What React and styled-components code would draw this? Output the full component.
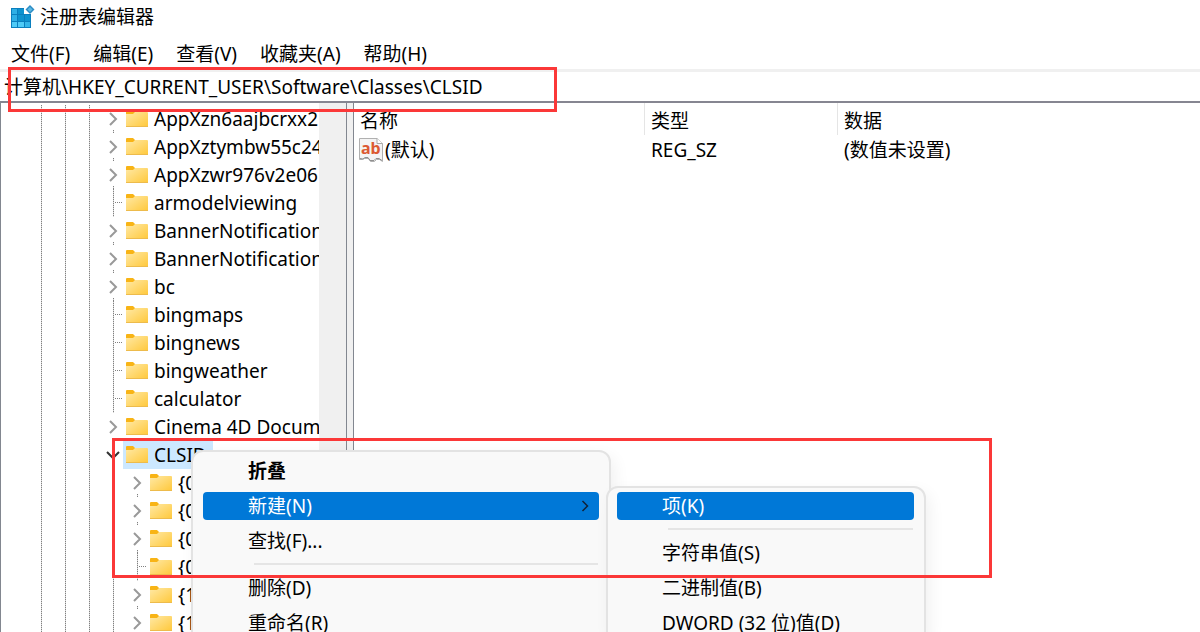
import { useState } from 'react';
import styled, { createGlobalStyle } from 'styled-components';

const GlobalStyle = createGlobalStyle`
  * {
    box-sizing: border-box;
  }

  body {
    margin: 0;
    overflow: hidden;
    background: #ffffff;
    color: #000000;
    font-family: 'Noto Sans', 'Noto Sans CJK SC', sans-serif;
    font-size: 19px;
    line-height: 28px;
  }

  button,
  input {
    font: inherit;
    color: inherit;
    border: none;
    background: none;
    padding: 0;
    margin: 0;
  }
`;

const MENUS = ['文件(F)', '编辑(E)', '查看(V)', '收藏夹(A)', '帮助(H)'];

const KEYS = [
  { name: 'AppXzn6aajbcrxx2', state: 'closed' },
  { name: 'AppXztymbw55c24', state: 'closed' },
  { name: 'AppXzwr976v2e06', state: 'closed' },
  { name: 'armodelviewing' },
  { name: 'BannerNotification', state: 'closed' },
  { name: 'BannerNotification', state: 'closed' },
  { name: 'bc', state: 'closed' },
  { name: 'bingmaps' },
  { name: 'bingnews' },
  { name: 'bingweather' },
  { name: 'calculator' },
  { name: 'Cinema 4D Docum', state: 'closed' },
  { name: 'CLSID', state: 'open', selected: true },
  { name: '{0', state: 'closed', child: true },
  { name: '{0', state: 'closed', child: true },
  { name: '{0', state: 'closed', child: true },
  { name: '{0', child: true },
  { name: '{1', state: 'closed', child: true },
  { name: '{1', state: 'closed', child: true },
];

const CONTEXT_ITEMS = [
  { label: '折叠', bold: true },
  { label: '新建(N)', active: true, arrow: true },
  { label: '查找(F)...' },
  { divider: true },
  { label: '删除(D)' },
  { label: '重命名(R)' },
];

const NEW_ITEMS = [
  { label: '项(K)', active: true },
  { divider: true },
  { label: '字符串值(S)' },
  { label: '二进制值(B)' },
  { label: 'DWORD (32 位)值(D)' },
];

const RegeditIcon = () => (
  <svg width="24" height="24" viewBox="0 0 24 24" aria-hidden="true">
    <path d="M0 3h13v6h7v14H0z" fill="#0b7fbe" />
    <path d="M1 4h5v5H1zM1 10h5v6H1z" fill="#2fb0e6" />
    <path d="M7 4h6v5H7zM7 10h6v6H7zM14 10h5v6h-5z" fill="#0e93cf" />
    <path d="M1 17h5v5H1zM7 17h6v5H7z" fill="#4fcbf7" />
    <path d="M14 17h5v5h-5z" fill="#35b6ea" />
    <path d="M19 0l4.500 4.500L19 9l-4.500-4.500z" fill="#2b8cc4" />
    <path d="M19 2l2.500 2.500L19 7l-2.500-2.500z" fill="#5cb8e4" />
  </svg>
);

const FolderIcon = () => (
  <svg width="22" height="18" viewBox="0 0 22 18" aria-hidden="true">
    <defs>
      <linearGradient id="folder" x1="0" y1="0" x2="1" y2="1">
        <stop offset="0" stopColor="#ffe9a6" />
        <stop offset="1" stopColor="#ffc83a" />
      </linearGradient>
    </defs>
    <path d="M0 1Q0 0 1 0h6l2 2v3H0z" fill="#f8b416" />
    <path d="M0 4h7l2-2h12q1 0 1 1v13q0 1-1 1H1q-1 0-1-1z" fill="url(#folder)" />
    <path d="M0 16.500h22" stroke="#edbb4c" />
  </svg>
);

const StringIcon = () => (
  <svg width="24" height="24" viewBox="0 0 24 24" aria-hidden="true">
    <path
      d="M.500.500h17.500l5.500 5V23.500l-3-2h-3l-2 2h-4l-2-3h-4l-2 1H.500z"
      fill="#f4f4f4"
      stroke="#b0b0b0"
    />
    <path d="M1 20.500l3 .500 2-1.500h3l2 3h4l2-2h3l3 2" fill="none" stroke="#8f8f8f" />
    <path d="M18 .500v5h5.500" fill="#ffffff" stroke="#a9a9a9" />
    <text x="2" y="16" fontFamily="Noto Sans" fontSize="16" fontWeight="700" fill="#dc5a32">ab</text>
  </svg>
);

const Chevron = ({ open }) => (
  <svg width="14" height="14" viewBox="0 0 14 14" fill="none" aria-hidden="true">
    {open ? (
      <path d="M1 4l6 6 6-6" stroke="#333333" strokeWidth="2" />
    ) : (
      <path d="M4 1l6 6-6 6" stroke="#999999" strokeWidth="2" />
    )}
  </svg>
);

const Menu = ({ label, items, className }) => (
  <MenuPanel className={className} role="menu" aria-label={label}>
    {items.map((item, index) =>
      item.divider ? (
        <MenuDivider key={index} role="separator" />
      ) : (
        <MenuItem key={item.label} role="menuitem" $active={item.active} $bold={item.bold}>
          {item.label}
          {item.arrow && (
            <svg width="8" height="12" viewBox="0 0 8 12" fill="none" aria-hidden="true">
              <path d="M1.500 1l5 5-5 5" stroke="#10233a" strokeWidth="1.500" />
            </svg>
          )}
        </MenuItem>
      )
    )}
  </MenuPanel>
);

const App = () => {
  const [path, setPath] = useState('计算机\\HKEY_CURRENT_USER\\Software\\Classes\\CLSID');

  return (
    <Window>
      <GlobalStyle />
      <TitleBar>
        <RegeditIcon />
        <Title>注册表编辑器</Title>
      </TitleBar>
      <MenuBar>
        {MENUS.map((menu) => (
          <MenuButton key={menu}>{menu}</MenuButton>
        ))}
      </MenuBar>
      <AddressInput aria-label="地址" value={path} onChange={(e) => setPath(e.target.value)} />

      <Panes>
        <TreePane>
          <Tree role="tree">
            {KEYS.map((key, index) => (
              <TreeRow key={index} role="treeitem" aria-selected={!!key.selected}>
                <Guide />
                <Guide />
                <Guide />
                {key.child && <Guide />}
                <Expander $state={key.state}>{key.state && <Chevron open={key.state === 'open'} />}</Expander>
                <KeyButton $selected={key.selected}>
                  <FolderIcon />
                  {key.name}
                </KeyButton>
              </TreeRow>
            ))}
          </Tree>
          <ScrollTrack />
        </TreePane>
        <Splitter />
        <ValuePane>
          <ValueTable>
            <thead>
              <tr>
                <HeadCell $width={291}>名称</HeadCell>
                <HeadCell $width={193}>类型</HeadCell>
                <HeadCell>数据</HeadCell>
              </tr>
            </thead>
            <tbody>
              <tr>
                <NameCell>
                  <NameLabel>
                    <StringIcon />
                    (默认)
                  </NameLabel>
                </NameCell>
                <Cell>REG_SZ</Cell>
                <Cell>(数值未设置)</Cell>
              </tr>
            </tbody>
          </ValueTable>
        </ValuePane>
      </Panes>

      <ContextMenu label="CLSID" items={CONTEXT_ITEMS} />
      <NewMenu label="新建" items={NEW_ITEMS} />
      <PathMark />
      <MenuMark />
    </Window>
  );
};

const Window = styled.div`
  position: relative;
  display: flex;
  flex-direction: column;
  height: 100vh;
  overflow: hidden;
`;

const TitleBar = styled.header`
  display: flex;
  align-items: center;
  gap: 5px;
  height: 33px;
  padding-left: 11px;
`;

const Title = styled.h1`
  margin: 0;
  font-size: 19px;
  font-weight: 400;
`;

const MenuBar = styled.nav`
  display: flex;
  align-items: center;
  gap: 23px;
  height: 39px;
  padding: 6px 0 0 11px;
  border-bottom: 3px solid #f0f0f0;
`;

const MenuButton = styled.button`
  white-space: nowrap;
`;

const AddressInput = styled.input`
  width: 100%;
  height: 31px;
  padding: 0 4px 1px;
  border-bottom: 2px solid #868691;
  outline: none;
`;

const Panes = styled.main`
  display: flex;
  flex: 1;
  min-height: 0;
`;

const TreePane = styled.section`
  display: flex;
  flex: 0 0 347px;
  border-left: 1px solid #828790;
  border-right: 1px solid #828790;
  overflow: hidden;
`;

const Tree = styled.ul`
  flex: 1;
  margin: 0;
  padding: 2px 0 0 28px;
  overflow: hidden;
  list-style: none;
`;

const TreeRow = styled.li`
  display: flex;
  height: 28px;
`;

const Guide = styled.span`
  flex: 0 0 24px;
  background: repeating-linear-gradient(to bottom, #808080 0 1px, #d8d8d8 1px 2px) 12px 0 / 1px 100% no-repeat;
`;

const Expander = styled(Guide)`
  display: flex;
  align-items: center;
  justify-content: center;
  background: ${(props) =>
    props.$state === 'open'
      ? 'none'
      : props.$state === 'closed'
      ? 'repeating-linear-gradient(to bottom, #808080 0 1px, #d8d8d8 1px 2px) 12px 25px / 1px 3px no-repeat'
      : `repeating-linear-gradient(to bottom, #808080 0 1px, #d8d8d8 1px 2px) 12px 0 / 1px 100% no-repeat,
         repeating-linear-gradient(to right, #808080 0 1px, transparent 1px 2px) 12px 13px / 10px 1px no-repeat`};
`;

const KeyButton = styled.button`
  display: flex;
  align-items: center;
  gap: 6px;
  flex: none;
  height: 28px;
  margin-left: -2px;
  padding: 0 6px 0 3px;
  white-space: nowrap;
  background: ${(props) => (props.$selected ? '#cce8ff' : 'transparent')};
`;

const ScrollTrack = styled.div`
  flex: 0 0 27px;
  background: #f0f0f0;
`;

const Splitter = styled.div`
  flex: 0 0 6px;
  background: #f0f0f0;
`;

const ValuePane = styled.section`
  flex: 1;
  min-width: 0;
  border-left: 1px solid #828790;
`;

const ValueTable = styled.table`
  width: 100%;
  table-layout: fixed;
  border-spacing: 0;
`;

const HeadCell = styled.th`
  width: ${(props) => (props.$width ? `${props.$width}px` : 'auto')};
  height: 32px;
  padding: 4px 0 0 6px;
  font-weight: 400;
  text-align: left;
  border-right: ${(props) => (props.$width ? '1px solid #e5e5e5' : 'none')};
`;

const Cell = styled.td`
  padding: 1px 0 0 6px;
  white-space: nowrap;
`;

const NameCell = styled(Cell)`
  padding-left: 5px;
`;

const NameLabel = styled.span`
  display: flex;
  align-items: center;
  gap: 2px;
`;

const MenuPanel = styled.div`
  position: absolute;
  display: flex;
  flex-direction: column;
  gap: 7px;
  background: #f9f9f9;
  border: 2px solid #e3e3e3;
  border-radius: 12px;
  box-shadow: 4px 6px 16px rgba(0, 0, 0, 0.06);
`;

const MenuItem = styled.button`
  display: flex;
  align-items: center;
  justify-content: space-between;
  height: 28px;
  padding: 0 10px 0 45px;
  border-radius: 4px;
  text-align: left;
  white-space: nowrap;
  font-weight: ${(props) => (props.$bold ? 700 : 400)};
  color: ${(props) => (props.$active ? '#ffffff' : '#000000')};
  background: ${(props) => (props.$active ? '#0078d7' : 'transparent')};
`;

const MenuDivider = styled.div`
  height: 2px;
  margin: 1px 1px 2px 51px;
  background: #e5e5e5;
`;

const ContextMenu = styled(Menu)`
  top: 450px;
  left: 191px;
  width: 420px;
  padding: 5px 10px;
`;

const NewMenu = styled(Menu)`
  top: 486px;
  left: 606px;
  width: 320px;
  padding: 4px 10px 4px 9px;
`;

const Mark = styled.div`
  position: absolute;
  border: 3px solid #fb3838;
  pointer-events: none;
`;

const PathMark = styled(Mark)`
  top: 67px;
  left: 8px;
  width: 549px;
  height: 45px;
`;

const MenuMark = styled(Mark)`
  top: 438px;
  left: 112px;
  width: 880px;
  height: 140px;
`;

export default App;
